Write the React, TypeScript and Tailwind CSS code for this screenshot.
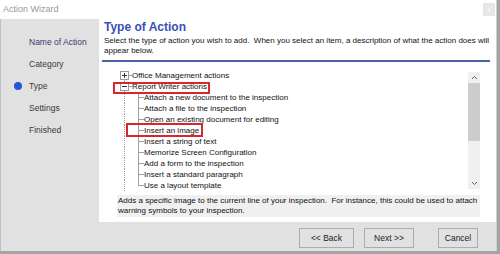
import React from 'react';

const font = { fontFamily: '"Liberation Sans", Arial, sans-serif' };

const steps = [
  { label: 'Name of Action', done: true },
  { label: 'Category' },
  { label: 'Type', active: true },
  { label: 'Settings' },
  { label: 'Finished' },
];

const children = [
  'Attach a new document to the inspection',
  'Attach a file to the inspection',
  'Open an existing document for editing',
  'Insert an image',
  'Insert a string of text',
  'Memorize Screen Configuration',
  'Add a form to the inspection',
  'Insert a standard paragraph',
  'Use a layout template',
];

function ExpandBox({ open, first }: { open?: boolean; first?: boolean }) {
  return (
    <div className="flex flex-col w-[9px] h-full">
      <div className={`flex-1 ml-[4px] w-0 ${first ? '' : 'border-l border-dotted border-[#a0a0a0]'}`} />
      <div className="w-[9px] h-[9px] border border-[#9a9a9a] bg-white flex items-center justify-center relative">
        <div className="w-[5px] h-px bg-[#333]" />
        {!open && <div className="absolute w-px h-[5px] bg-[#333]" />}
      </div>
      <div className="flex-1 ml-[4px] w-0 border-l border-dotted border-[#a0a0a0]" />
    </div>
  );
}

function RootRow({ label, open, first }: { label: string; open?: boolean; first?: boolean }) {
  return (
    <div className="flex h-[11px] items-center">
      <div className="w-[10px]" />
      <ExpandBox open={open} first={first} />
      <div className="w-[3px] h-px bg-[#a0a0a0]" />
      <span className="leading-[11px] whitespace-nowrap">{label}</span>
    </div>
  );
}

function ChildRow({ label, last }: { label: string; last?: boolean }) {
  return (
    <div className="flex h-[11px] items-stretch">
      <div className="w-[15px] border-r border-dotted border-[#a0a0a0]" />
      <div className="w-[13px]" />
      <div className="w-[6px] flex flex-col">
        <div className="h-[6px] border-l border-b border-[#a0a0a0]" />
        <div className={`flex-1 ${last ? '' : 'border-l border-[#a0a0a0]'}`} />
      </div>
      <span className="leading-[11px] whitespace-nowrap">{label}</span>
    </div>
  );
}

function Scrollbar() {
  return (
    <div className="w-[12px] my-[2px] mr-px bg-[#f0f0f0] flex flex-col">
      <div className="h-[11px] flex items-center justify-center">
        <svg width="7" height="5" viewBox="0 0 7 5">
          <path d="M1 4 L3.5 1.5 L6 4" fill="none" stroke="#606060" strokeWidth="1" />
        </svg>
      </div>
      <div className="h-[58px] bg-[#cdcdcd]" />
      <div className="flex-1" />
      <div className="h-[11px] flex items-center justify-center">
        <svg width="7" height="5" viewBox="0 0 7 5">
          <path d="M1 1 L3.5 3.5 L6 1" fill="none" stroke="#606060" strokeWidth="1" />
        </svg>
      </div>
    </div>
  );
}

export default function App() {
  return (
    <div className="w-[500px] h-[254px] bg-[#a4a4a4] overflow-hidden" style={font}>
      <div className="w-[497px] h-[251px] bg-white flex flex-col border-r border-[#cfcfcf]">
        {/* title bar */}
        <div className="h-[19px] flex items-center justify-between pl-[3px] pr-[1px]">
          <span className="text-[9px] text-[#9a9a9a]">Action Wizard</span>
          <div className="w-[12px] h-[13px] bg-[#e6e6e6] flex items-center justify-center">
            <svg width="6" height="6" viewBox="0 0 6 6">
              <path d="M0.5 0.5 L5.5 5.5 M5.5 0.5 L0.5 5.5" stroke="#f6f6f6" strokeWidth="1" />
            </svg>
          </div>
        </div>

        <div className="flex-1 flex">
          {/* steps */}
          <div className="w-[99px] bg-[#e1e1e1] border-l border-[#b9c3d2] pt-[12px] flex flex-col">
            {steps.map((s) => (
              <div key={s.label} className="h-[22px] flex items-center pl-[13px]">
                <div className="w-[15px] flex items-center">
                  {s.active && <div className="w-[8px] h-[8px] rounded-full bg-[#2456d6]" />}
                </div>
                <span className={`text-[8.5px] ${s.done ? 'text-[#3a3a6e]' : 'text-[#3a3a3a]'}`}>{s.label}</span>
              </div>
            ))}
          </div>

          {/* main */}
          <div className="flex-1 flex flex-col">
            <div className="flex-1 flex flex-col">
              <h1 className="mt-px ml-[5px] h-[14px] leading-[14px] text-[12px] font-bold text-[#3a50b4]">Type of Action</h1>
              <p className="mt-[2px] ml-[5px] text-[8px] leading-[10px] text-[#111] whitespace-nowrap">
                Select the type of action you wish to add.&nbsp; When you select an item, a description of what the action does will
                <br />
                appear below.
              </p>
              <div className="mt-[4px] ml-[3px] mr-[6px] h-[2px] bg-[#4a62a8]" />

              <div className="relative mt-[8px] ml-[11px] mr-[15px] h-[121px] flex text-[8px] text-[#111]">
                <div className="flex-1 flex flex-col overflow-hidden">
                  <RootRow label="Office Management actions" first />
                  <RootRow label="Report Writer actions" open />
                  {children.map((c, i) => (
                    <ChildRow key={c} label={c} last={i === children.length - 1} />
                  ))}
                  <div className="flex-1 ml-[15px] border-l border-dotted border-[#a0a0a0] -translate-x-px" />
                </div>
                <Scrollbar />
                <div className="absolute left-[3px] top-[12px] w-[97px] h-[12px] border-2 border-[#d8262e]" />
                <div className="absolute left-[16px] top-[53px] w-[77px] h-[14px] border-2 border-[#d8262e]" />
              </div>

              <div className="mt-[4px] ml-[18px] mr-[16px] h-[22px] bg-[#f0f0f0] pl-px pt-px text-[8px] leading-[10px] text-[#111] whitespace-nowrap">
                Adds a specific image to the current line of your inspection.&nbsp; For instance, this could be used to attach
                <br />
                warning symbols to your inspection.
              </div>
            </div>

            {/* footer */}
            <div className="h-[29px] bg-[#e1e1e1] flex items-start pt-[6px] pr-[18px] justify-end">
              <button className="w-[55px] h-[20px] border border-[#adadad] bg-[#e1e1e1] text-[8.5px] text-[#222]">&lt;&lt; Back</button>
              <button className="ml-[10px] w-[50px] h-[20px] border border-[#adadad] bg-[#e1e1e1] text-[8.5px] text-[#222]">Next &gt;&gt;</button>
              <button className="ml-[24px] w-[40px] h-[20px] border border-[#adadad] bg-[#e1e1e1] text-[8.5px] text-[#222]">Cancel</button>
            </div>
          </div>
        </div>
      </div>
    </div>
  );
}
